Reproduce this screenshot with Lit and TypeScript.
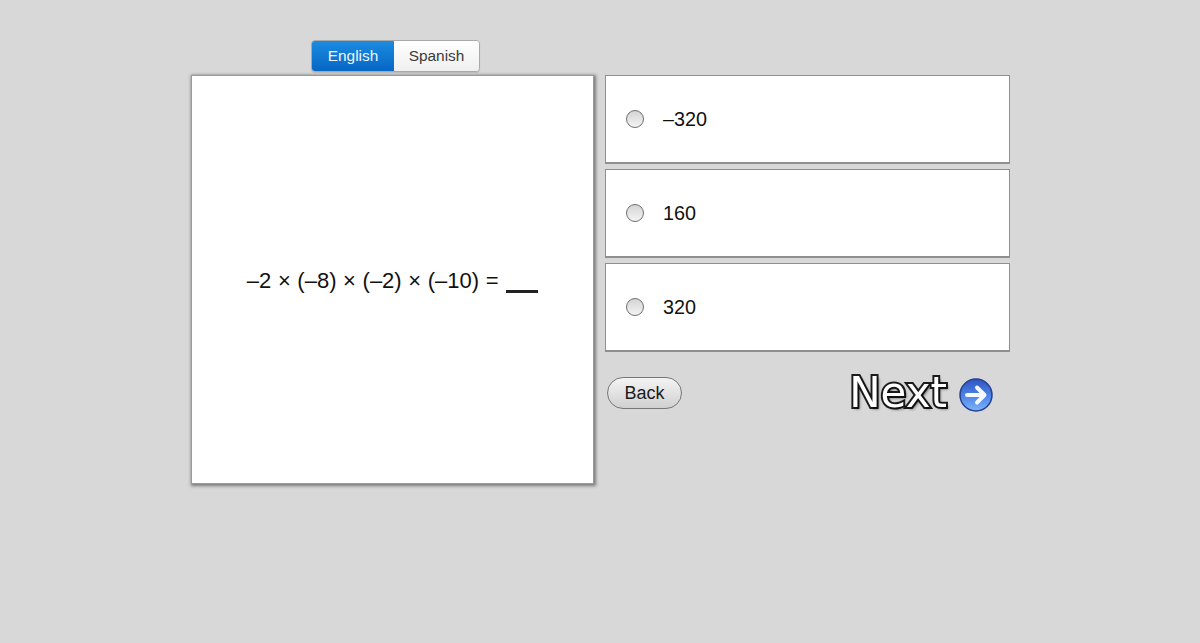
import { LitElement, html, css } from "lit";
import { customElement } from "lit/decorators.js";

@customElement("app-root")
export class AppRoot extends LitElement {
  static styles = css`
    :host { display: block; height: 643px; background: #d8d8d8; font-family: "Liberation Sans", Arial, sans-serif; color: #1a1a1a; overflow: hidden; }
    .page { display: flex; flex-direction: column; padding: 40px 0 0 191px; }
    .toggle { display: flex; width: 169px; height: 32px; margin-left: 120px; margin-bottom: 3px; box-sizing: border-box; border-radius: 4px; border: 1px solid #a9a9a9; overflow: hidden; font-size: 15.4px; box-shadow: 0 1px 1px rgba(0,0,0,.12); }
    .seg { display: flex; align-items: center; justify-content: center; }
    .en { width: 82px; color: #eef6fd; background: linear-gradient(#1b8be0, #0667c4); }
    .es { flex: 1; color: #3b3b3b; background: linear-gradient(#ffffff, #efefef); }
    .main { display: flex; gap: 11px; align-items: flex-start; }
    .question { width: 403px; height: 409px; box-sizing: border-box; background: #fff; border: 1px solid #9a9a9a; box-shadow: 1px 1px 3px 1px rgba(60,60,60,.6); display: flex; align-items: center; justify-content: center; font-size: 22px; padding-top: 3px; word-spacing: 0.5px; color: #111; }
    .blank { display: inline-block; width: 32px; height: 3px; background: #222; margin-left: 1px; vertical-align: -5px; }
    .side { width: 405px; display: flex; flex-direction: column; gap: 5px; }
    .card { height: 89px; box-sizing: border-box; background: #fff; border: 1px solid #8f8f8f; border-bottom-width: 2px; display: flex; align-items: center; gap: 19px; padding-left: 20px; font-size: 19.8px; color: #111; }
    .radio { width: 18px; height: 18px; box-sizing: border-box; border-radius: 50%; border: 1px solid #6f6f6f; background: linear-gradient(#d4d4d4, #f4f4f4); flex: none; }
    .nav { display: flex; align-items: flex-start; justify-content: space-between; padding: 15px 16px 0 2px; }
    .back { width: 75px; height: 32px; margin-top: 5px; box-sizing: border-box; border-radius: 16px; border: 1px solid #777; background: linear-gradient(#f4f4f4, #d0d0d0); display: flex; align-items: center; justify-content: center; font-size: 18px; padding-top: 1px; }
    .next { display: flex; align-items: center; gap: 11px; }
    .next-text { font-family: "DejaVu Sans", sans-serif; font-size: 42px; line-height: 42px; letter-spacing: 0; color: #fff; -webkit-text-stroke: 4px #1c1c1c; paint-order: stroke fill; text-shadow: 2px 2px 3px rgba(0,0,0,.6); filter: blur(0.4px); }
    .next-icon { display: block; margin-top: 3px; filter: blur(0.3px); }
  `;

  render() {
    return html`
      <div class="page">
        <div class="toggle">
          <div class="seg en">English</div>
          <div class="seg es">Spanish</div>
        </div>
        <div class="main">
          <div class="question"><span>–2 × (–8) × (–2) × (–10) = <span class="blank"></span></span></div>
          <div class="side">
            <div class="card"><span class="radio"></span><span>–320</span></div>
            <div class="card"><span class="radio"></span><span>160</span></div>
            <div class="card"><span class="radio"></span><span>320</span></div>
            <div class="nav">
              <div class="back">Back</div>
              <div class="next">
                <span class="next-text">Next</span>
                <svg class="next-icon" width="36" height="36" viewBox="0 0 36 36">
                  <defs>
                    <linearGradient id="b" x1="0" y1="0" x2="0" y2="1">
                      <stop offset="0" stop-color="#2f55c0" />
                      <stop offset="0.55" stop-color="#4f86ea" />
                      <stop offset="1" stop-color="#7fb4f6" />
                    </linearGradient>
                  </defs>
                  <circle cx="18" cy="18" r="16" fill="url(#b)" stroke="#24408f" stroke-width="1.5" />
                  <path d="M9 18H26M19 10.5L26.5 18L19 25.5" fill="none" stroke="#f4f8ff" stroke-width="4" stroke-linecap="round" stroke-linejoin="round" />
                </svg>
              </div>
            </div>
          </div>
        </div>
      </div>
    `;
  }
}
